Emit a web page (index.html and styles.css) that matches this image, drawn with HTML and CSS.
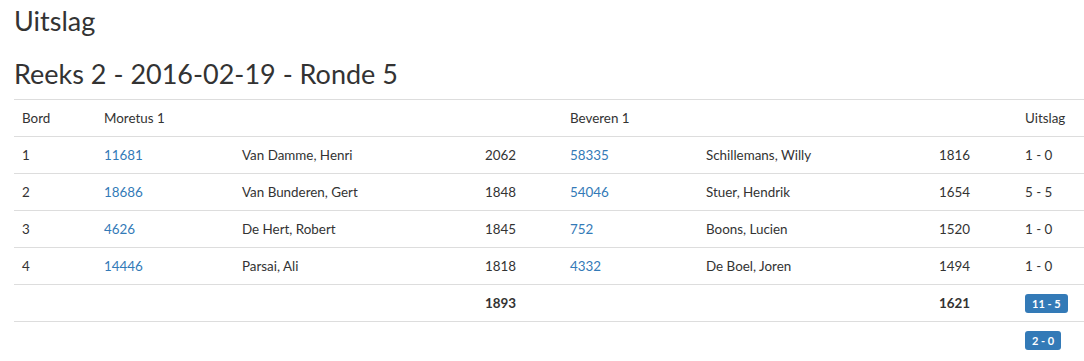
FILE: index.html
```html
<!DOCTYPE html>
<html lang="nl">
<head>
<meta charset="utf-8">
<title>Uitslag</title>
<link rel="stylesheet" href="styles.css">
</head>
<body>
<div class="page">
  <h1 class="title">Uitslag</h1>
  <h2 class="subtitle">Reeks 2 - 2016-02-19 - Ronde 5</h2>
  <table class="results">
    <colgroup>
      <col class="c-bord">
      <col class="c-id1">
      <col class="c-name1">
      <col class="c-elo1">
      <col class="c-id2">
      <col class="c-name2">
      <col class="c-elo2">
      <col class="c-res">
    </colgroup>
    <tr>
      <td>Bord</td><td>Moretus 1</td><td></td><td></td><td>Beveren 1</td><td></td><td></td><td>Uitslag</td>
    </tr>
    <tr>
      <td>1</td><td><a href="#">11681</a></td><td>Van Damme, Henri</td><td>2062</td><td><a href="#">58335</a></td><td>Schillemans, Willy</td><td>1816</td><td>1 - 0</td>
    </tr>
    <tr>
      <td>2</td><td><a href="#">18686</a></td><td>Van Bunderen, Gert</td><td>1848</td><td><a href="#">54046</a></td><td>Stuer, Hendrik</td><td>1654</td><td>5 - 5</td>
    </tr>
    <tr>
      <td>3</td><td><a href="#">4626</a></td><td>De Hert, Robert</td><td>1845</td><td><a href="#">752</a></td><td>Boons, Lucien</td><td>1520</td><td>1 - 0</td>
    </tr>
    <tr>
      <td>4</td><td><a href="#">14446</a></td><td>Parsai, Ali</td><td>1818</td><td><a href="#">4332</a></td><td>De Boel, Joren</td><td>1494</td><td>1 - 0</td>
    </tr>
    <tr>
      <td></td><td></td><td></td><td class="total">1893</td><td></td><td></td><td class="total">1621</td><td><span class="label">11 - 5</span></td>
    </tr>
    <tr>
      <td></td><td></td><td></td><td></td><td></td><td></td><td></td><td><span class="label">2 - 0</span></td>
    </tr>
  </table>
</div>
</body>
</html>
```

FILE: styles.css
```css
html, body {
  margin: 0;
  padding: 0;
  background: #fff;
}
body {
  font-family: "Lato", "Open Sans", "Liberation Sans", sans-serif;
  font-size: 13.4px;
  line-height: 1.42857;
  color: #333;
}
.page {
  padding: 0 0 0 14px;
}
.title, .subtitle {
  font-family: "Lato", "Open Sans", sans-serif;
  font-weight: 400;
  font-size: 27px;
  line-height: 1.1;
  color: #333;
  margin: 0;
}
.title {
  padding-top: 6px;
}
.subtitle {
  margin-top: 23px;
  margin-bottom: 11px;
}
.results {
  width: 1070px;
  border-collapse: collapse;
  border-spacing: 0;
  table-layout: fixed;
}
.results td {
  padding: 8px;
  border-top: 1px solid #ddd;
  vertical-align: top;
  line-height: 20px;
  white-space: nowrap;
}
.c-bord { width: 82px; }
.c-id1 { width: 138px; }
.c-name1 { width: 243px; }
.c-elo1 { width: 85px; }
.c-id2 { width: 136px; }
.c-name2 { width: 233px; }
.c-elo2 { width: 86px; }
.results a {
  color: #337ab7;
  text-decoration: none;
}
.total {
  font-weight: 700;
}
.label {
  display: inline-block;
  background: #337ab7;
  color: #fff;
  font-size: 11px;
  font-weight: 700;
  line-height: 1;
  padding: 4px 7px 4px;
  border-radius: 3px;
  vertical-align: top;
  margin-top: 1px;
}
```
